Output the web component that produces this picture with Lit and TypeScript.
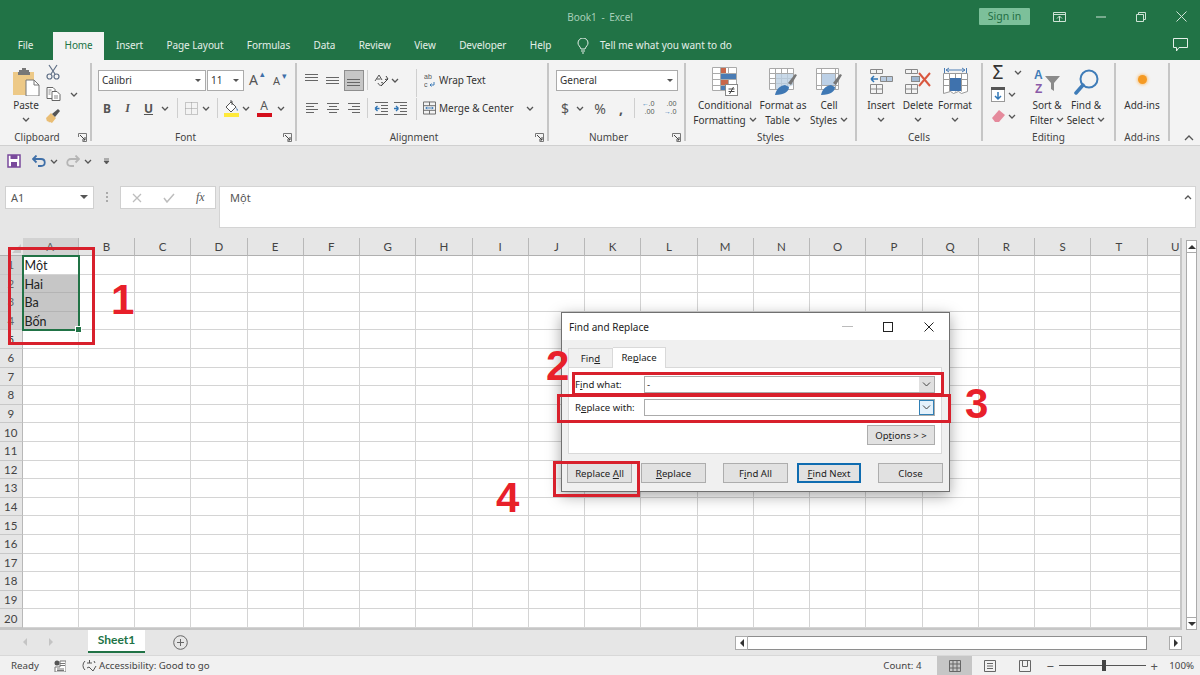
import { LitElement, css, html, svg } from "lit";
import { customElement } from "lit/decorators.js";

const COLS = "ABCDEFGHIJKLMNOPQRSTU".split("");
const ROWS = Array.from({ length: 20 }, (_, i) => i + 1);
const VALUES: Record<number, string> = { 1: "Một", 2: "Hai", 3: "Ba", 4: "Bốn" };

const chev = html`<svg class="chev" width="8" height="5" viewBox="0 0 8 5"><path d="M1 1l3 3 3-3" fill="none" stroke="#555" stroke-width="1.3"/></svg>`;
const launcher = html`<svg class="launcher" width="9" height="9" viewBox="0 0 9 9"><path d="M.5 4V.5h8v8H4.5" fill="none" stroke="#777"/><path d="M2 2l5 5M7 4v3H4" fill="none" stroke="#444"/></svg>`;
const lines = (rows: number[][]) => html`<svg width="14" height="14" viewBox="0 0 14 14">${rows.map(
  ([a, b, y]) => svg`<path d="M${a} ${y}.5H${b}" stroke="#666" stroke-width="1"/>`
)}</svg>`;

const paste = html`<svg width="27" height="28" viewBox="0 0 27 28">
  <rect x="0" y="4" width="21" height="23" fill="#edc987"/>
  <path d="M6 4V2h3V0h4v2h3v2h1v3H5V4z" fill="#777"/>
  <path d="M13 12h8l5 5v11H13z" fill="#fff" stroke="#777"/><path d="M21 12v5h5" fill="none" stroke="#777"/>
</svg>`;
const cut = html`<svg width="14" height="16" viewBox="0 0 14 16" fill="none" stroke="#5f6f86" stroke-width="1.2">
  <path d="M3 1l6 9M11 1L5 10"/><circle cx="3.5" cy="12.5" r="2.5"/><circle cx="10.5" cy="12.5" r="2.5"/></svg>`;
const copy = html`<svg width="15" height="14" viewBox="0 0 15 14" fill="#fff" stroke="#666">
  <path d="M1 .5h6l2 2v9H1z"/><path d="M6 4.5h5l3 3v6H6z"/><path d="M2.500 3h3M2.500 5h2M2.500 7h2M8 9h4M8 11h4" stroke="#888"/></svg>`;
const painter = html`<svg width="15" height="14" viewBox="0 0 15 14"><path d="M0 9l5-5 5 5-4 5-2-1-1 .5-1-1.500-1 .5z" fill="#e9bd74"/><path d="M6 5l3 3 5-6-2-2z" fill="#555"/></svg>`;
const grow = html`<span class="aa">A<i>▴</i></span>`;
const shrink = html`<span class="aa sm">A<i>▾</i></span>`;
const borders = html`<svg width="13" height="13" viewBox="0 0 13 13" fill="none" stroke="#999" stroke-dasharray="1 1"><path d="M.5.500h12v12H.5zM6.500.5v12M.5 6.500h12"/></svg>`;
const fill = html`<svg width="15" height="17" viewBox="0 0 15 17"><path d="M2 7l5-5 5 5-5 5z" fill="#fff" stroke="#555"/><path d="M6 1h2v4" fill="none" stroke="#555"/><path d="M12 7l2 3-1 1z" fill="#3f6fa8"/><rect y="13" width="15" height="4" fill="#ffe93b"/></svg>`;
const color = html`<span class="fcolor">A</span>`;
const orient = html`<svg width="16" height="14" viewBox="0 0 16 14" fill="none" stroke="#555"><path d="M2 8l4-6 3 5M3.500 6h4M5 10c1 3 4 3 5 1 .7-1.400-1-2.300-2-1"/><path d="M8 13l7-7M13 3l2 3-3 .5" stroke="#444"/></svg>`;
const wrap = html`<svg width="12" height="20" viewBox="0 0 12 20"><text x="0" y="9" class="tiny">ab</text><text x="0" y="17" class="tiny">c</text><path d="M6 15h4v-3M6 15l1.500-1.500M6 15l1.500 1.500" fill="none" stroke="#3f7cb8"/></svg>`;
const merge = html`<svg width="13" height="14" viewBox="0 0 14 14" fill="none" stroke="#666"><path d="M.5.500h13v13H.5zM.5 4.500h13M.5 9.500h13M7 .5v4M7 9.500v4"/><path d="M3 7h8M3 7l1.500-1.200M3 7l1.500 1.200M11 7L9.500 5.800M11 7L9.500 8.200" stroke="#3f7cb8"/></svg>`;
const indentL = html`<svg width="15" height="13" viewBox="0 0 15 13" fill="none"><path d="M1 .5h13M7 3.500h7M7 6.500h7M7 9.500h7M1 12.500h13" stroke="#666"/><path d="M1 6.500h4.500M1 6.500l2.500-2.500M1 6.500L3.500 9" stroke="#2f75b5" stroke-width="1.300"/></svg>`;
const indentR = html`<svg width="15" height="13" viewBox="0 0 15 13" fill="none"><path d="M1 .5h13M7 3.500h7M7 6.500h7M7 9.500h7M1 12.500h13" stroke="#666"/><path d="M5.500 6.500H1M5.500 6.500L3 4M5.500 6.500L3 9" stroke="#2f75b5" stroke-width="1.300"/></svg>`;
const decMore = html`<span class="dec"><b><i>←</i>.0</b><b>.00</b></span>`;
const decLess = html`<span class="dec"><b>.00</b><b><i>→</i>.0</b></span>`;

const cond = html`<svg width="26" height="29" viewBox="0 0 26 29">
  <path d="M.5.500h24v23H.5zM.5 6.500h24M.5 12.500h24M.5 18.500h24M8.500.5v23M16.500.5v23" fill="#fff" stroke="#aaa"/>
  <rect x="9" y="1" width="5" height="5" fill="#c8674a"/><rect x="9" y="7" width="15" height="5" fill="#4a7cb4"/>
  <rect x="9" y="13" width="7" height="5" fill="#c8674a"/><rect x="9" y="19" width="4" height="4" fill="#4a7cb4"/>
  <rect x="13.500" y="17.500" width="12" height="11" fill="#fff" stroke="#888"/>
  <path d="M16.500 22h6M16.500 24.500h6M21.500 20l-4 7" stroke="#444" fill="none"/></svg>`;
const fmtTable = html`<svg width="28" height="28" viewBox="0 0 28 28">
  <path d="M.5.500h24v21H.5zM.5 5.500h24M.5 10.500h24M.5 15.500h24M6.500.5v21M12.500.5v21M18.500.5v21" fill="#fff" stroke="#a8a8a8"/>
  <path d="M7 6h17v11l-9 4H7z" fill="#bccfe2" opacity=".8"/>
  <path d="M19 15l7-9 2 1-6 10z" fill="#777"/><path d="M6 27c1-5 4-9 10-10l4 2c0 4-4 8-14 8z" fill="#3f78b4"/></svg>`;
const cellStyles = html`<svg width="26" height="28" viewBox="0 0 26 28">
  <path d="M.5.500h22v21H.5zM.5 5.500h22M5.500.5v21M19.500.5v21M.5 17.500h22" fill="#fff" stroke="#a8a8a8"/>
  <rect x="6" y="6" width="13" height="11" fill="#bcd0e6"/>
  <path d="M17 15l7-9 2 1-6 10z" fill="#777"/><path d="M5 27c1-5 4-9 10-10l4 2c0 4-4 8-14 8z" fill="#3f78b4"/></svg>`;
const insert = html`<svg width="24" height="25" viewBox="0 0 24 25" fill="none" stroke="#888">
  <path d="M1.500.5h12v4h-12zM7.500.5v4M1.500 15.500h12v9h-12zM1.500 20h12M7.500 15.500v9"/>
  <path d="M11.500 7.500h12v5h-12zM17.500 7.500v5" fill="#b8cbe0"/>
  <path d="M2 10h7M2 10l3-3M2 10l3 3" stroke="#2f75b5" stroke-width="1.500"/></svg>`;
const del = html`<svg width="27" height="25" viewBox="0 0 27 25" fill="none" stroke="#888">
  <path d="M.5.500h12v4H.5zM6.500.5v4M.5 15.500h12v9H.5zM.5 20h12M6.500 15.500v9"/>
  <rect x="6.500" y="7.500" width="8" height="5" fill="#9fb8d2"/>
  <path d="M14 4l11 13M25 4L14 17" stroke="#d9573f" stroke-width="2"/></svg>`;
const format = html`<svg width="25" height="29" viewBox="0 0 25 29" fill="none">
  <path d="M1.500 1v5M23.500 1v5M3 3h19M3 3l3-2M3 3l3 2M22 3l-3-2M22 3l-3 2" stroke="#4a7cb4"/>
  <path d="M.5 6.500h24v18l-6 2-3-2-5 2-3-2-7 2zM.5 12.500h24M.5 18.500h24M6.500 6.500v18M12.500 6.500v18M18.500 6.500v18" fill="#fff" stroke="#999"/>
  <rect x="7" y="11" width="11" height="13" fill="#3f72ad"/></svg>`;
const fillDown = html`<svg width="14" height="15" viewBox="0 0 14 15"><rect x=".5" y=".5" width="13" height="14" fill="#fff" stroke="#999"/><rect width="14" height="3" fill="#555"/><path d="M7 5v7M4 9l3 3 3-3" fill="none" stroke="#2f75b5" stroke-width="1.500"/></svg>`;
const eraser = html`<svg width="13" height="12" viewBox="0 0 13 12"><path d="M0 8l7-8 6 5-6 7H3z" fill="#e58a9c"/></svg>`;
const sortIcon = html`<svg width="27" height="29" viewBox="0 0 27 29"><text x="0" y="12" class="sort-a">A</text><text x="1" y="26" class="sort-z">Z</text><path d="M11 9h15l-6 7v8l-3-2v-6z" fill="#8a8a8a"/></svg>`;
const findIcon = html`<svg width="25" height="26" viewBox="0 0 25 26" fill="none"><circle cx="15" cy="10" r="8.500" stroke="#3f7cb8" stroke-width="2"/><path d="M9 16l-7 8" stroke="#3f7cb8" stroke-width="3.500" stroke-linecap="round"/></svg>`;

const big = (icon: unknown, top: string, bottom: unknown) => html`<div class="big">
  <div class="big-ic">${icon}</div><div class="big-tx">${top}</div><div class="big-tx">${bottom}</div></div>`;

@customElement("app-root")
export class AppRoot extends LitElement {
  private titleBar() {
    return html`<div class="title">
      <div></div>
      <div class="doc">Book1 - Excel</div>
      <div class="win">
        <button class="signin">Sign in</button>
        <svg width="13" height="10" viewBox="0 0 13 10" fill="none" stroke="#cfe3d6"><path d="M.5.500h12v9H.5zM.5 2.500h12M4 6.500l2.500-2.500L9 6.500M6.500 4v5"/></svg>
        <svg class="wi-b" width="10" height="2" viewBox="0 0 10 2"><path d="M0 1h10" stroke="#cfe3d6"/></svg>
        <svg class="wi-c" width="10" height="10" viewBox="0 0 10 10" fill="none" stroke="#cfe3d6"><path d="M.5 2.500h7v7h-7zM2.500 2.500v-2h7v7h-2"/></svg>
        <svg class="wi-d" width="11" height="11" viewBox="0 0 11 11"><path d="M.5.500l10 10M10.500.5l-10 10" stroke="#cfe3d6"/></svg>
      </div>
    </div>`;
  }

  private tabs() {
    const names = ["Insert", "Page Layout", "Formulas", "Data", "Review", "View", "Developer", "Help"];
    return html`<div class="tabs">
      <div class="tab file">File</div>
      <div class="tab home">Home</div>
      ${names.map((n) => html`<div class="tab">${n}</div>`)}
      <svg class="bulb" width="12" height="16" viewBox="0 0 12 16" fill="none" stroke="#e4efe8"><path d="M4 11C3 8 1 7.500 1 5a5 5 0 0 1 10 0c0 2.500-2 3-3 6zM4 13h4M5 15h2"/></svg>
      <div class="tell">Tell me what you want to do</div>
      <svg class="comment" width="15" height="14" viewBox="0 0 15 14" fill="none" stroke="#e4efe8"><path d="M.5.500h14v9H6L3.500 13V9.500h-3z"/></svg>
    </div>`;
  }

  private ribbon() {
    return html`<div class="ribbon">
      <section class="group g-clip">
        <div class="body clip-body">
          <div class="big paste">
            <div class="big-ic">${paste}</div><div class="big-tx">Paste</div><div class="big-tx">${chev}</div>
          </div>
          <div class="clip-small">
            <div>${cut}</div><div></div>
            <div>${copy}</div><div>${chev}</div>
            <div>${painter}</div><div></div>
          </div>
        </div>
        <div class="label launch">Clipboard${launcher}</div>
      </section>

      <section class="group g-font">
        <div class="body rows">
          <div class="cells font-1">
            <div class="select">Calibri<span class="tri"></span></div>
            <div class="select">11<span class="tri"></span></div>
            <div>${grow}</div><div>${shrink}</div>
          </div>
          <div class="cells font-2">
            <div class="fmt b">B</div><div class="fmt i">I</div><div class="fmt u">U</div><div>${chev}</div>
            <div><span class="sep"></span></div><div>${borders}</div><div>${chev}</div>
            <div><span class="sep"></span></div><div>${fill}</div><div>${chev}</div>
            <div>${color}</div><div>${chev}</div>
          </div>
        </div>
        <div class="label launch">Font${launcher}</div>
      </section>

      <section class="group g-align">
        <div class="body rows">
          <div class="cells align-1">
            <div>${lines([[0, 13, 1], [0, 13, 4], [0, 13, 7]])}</div>
            <div>${lines([[0, 13, 4], [0, 13, 7], [0, 13, 10]])}</div>
            <div class="pressed">${lines([[0, 13, 6], [0, 13, 9], [0, 13, 12]])}</div>
            <div><span class="sep"></span></div><div>${orient}</div><div>${chev}</div><div></div>
            <div class="sep-cell"><span class="sep sep-top"></span></div>
            <div class="with-ic">${wrap}<span>Wrap Text</span></div>
          </div>
          <div class="cells align-2">
            <div>${lines([[1, 13, 2], [1, 9, 5], [1, 13, 8], [1, 9, 11]])}</div>
            <div>${lines([[1, 13, 2], [3, 11, 5], [1, 13, 8], [3, 11, 11]])}</div>
            <div>${lines([[1, 13, 2], [5, 13, 5], [1, 13, 8], [5, 13, 11]])}</div>
            <div><span class="sep"></span></div><div>${indentL}</div><div>${indentR}</div>
            <div class="sep-cell"><span class="sep sep-bot"></span></div>
            <div class="with-ic">${merge}<span>Merge &amp; Center</span></div>
            <div>${chev}</div>
          </div>
        </div>
        <div class="label launch">Alignment${launcher}</div>
      </section>

      <section class="group g-num">
        <div class="body rows">
          <div class="cells num-1"><div class="select">General<span class="tri"></span></div></div>
          <div class="cells num-2">
            <div class="sym">$</div><div>${chev}</div><div class="sym">%</div><div class="sym comma">,</div>
            <div><span class="sep"></span></div><div>${decMore}</div><div>${decLess}</div>
          </div>
        </div>
        <div class="label launch">Number${launcher}</div>
      </section>

      <section class="group g-styles">
        <div class="body bigs">
          ${big(cond, "Conditional", html`Formatting ${chev}`)}
          ${big(fmtTable, "Format as", html`Table ${chev}`)}
          ${big(cellStyles, "Cell", html`Styles ${chev}`)}
        </div>
        <div class="label">Styles</div>
      </section>

      <section class="group g-cells">
        <div class="body bigs">
          ${big(insert, "Insert", chev)}
          ${big(del, "Delete", chev)}
          ${big(format, "Format", chev)}
        </div>
        <div class="label">Cells</div>
      </section>

      <section class="group g-edit">
        <div class="body bigs">
          <div class="edit-small">
            <div class="sigma">Σ</div><div class="c1">${chev}</div>
            <div>${fillDown}</div><div class="c2">${chev}</div>
            <div>${eraser}</div><div class="c2">${chev}</div>
          </div>
          ${big(sortIcon, "Sort &", html`Filter ${chev}`)}
          ${big(findIcon, "Find &", html`Select ${chev}`)}
        </div>
        <div class="label">Editing</div>
      </section>

      <section class="group g-add">
        <div class="body bigs">
          ${big(html`<span class="dot"></span>`, "Add-ins", "")}
        </div>
        <div class="label">Add-ins</div>
      </section>

      <div class="collapse">
        <svg width="10" height="6" viewBox="0 0 10 6"><path d="M1 5l4-4 4 4" fill="none" stroke="#555" stroke-width="1.300"/></svg>
      </div>
    </div>`;
  }

  private qat() {
    return html`<div class="qat">
      <svg width="14" height="14" viewBox="0 0 14 14"><path d="M1 1h12v12H1z" fill="#fff" stroke="#7a4a9c" stroke-width="1.500"/><rect x="3.500" y="1" width="7" height="4" fill="#7a4a9c"/><rect x="4" y="8" width="6" height="5" fill="#7a4a9c"/></svg>
      <svg class="q-undo" width="14" height="12" viewBox="0 0 14 12" fill="none" stroke="#3f6fa8" stroke-width="1.800"><path d="M1 4h8c5 0 5 7 0 7H6M4.500 .5L1 4l3.500 3.500"/></svg>
      <span class="q-c1">${chev}</span>
      <svg class="q-redo" width="14" height="12" viewBox="0 0 14 12" fill="none" stroke="#b5b5b5" stroke-width="1.800"><path d="M13 4H5c-5 0-5 7 0 7h3M9.500 .5L13 4 9.500 7.500"/></svg>
      <span class="q-c2">${chev}</span>
      <svg class="q-more" width="7" height="7" viewBox="0 0 7 7"><path d="M1 1h5M1 3h5l-2.500 3z" stroke="#555" fill="#555" stroke-width=".8"/></svg>
    </div>`;
  }

  private formulaBar() {
    return html`<div class="fbar">
      <div class="namebox">A1<span class="tri"></span></div>
      <div class="grip"></div>
      <div class="fx-box">
        <svg width="10" height="10" viewBox="0 0 10 10"><path d="M1 1l8 8M9 1L1 9" stroke="#bdbdbd" stroke-width="1.300"/></svg>
        <svg width="12" height="10" viewBox="0 0 12 10"><path d="M1 5l3 4 7-8" fill="none" stroke="#bdbdbd" stroke-width="1.500"/></svg>
        <span class="fx">fx</span>
      </div>
      <div class="finput">Một
        <svg class="f-up" width="8" height="5" viewBox="0 0 8 5"><path d="M1 4l3-3 3 3" fill="none" stroke="#555" stroke-width="1.300"/></svg>
      </div>
    </div>`;
  }

  private sheet() {
    return html`<div class="sheet-wrap">
      <div class="sheet">
        <div class="corner"><span class="corner-tri"></span></div>
        ${COLS.map((c) => html`<div class="ch ${c === "A" ? "ch-on" : ""}">${c}</div>`)}
        ${ROWS.map(
          (r) => html`<div class="rh ${r <= 4 ? "rh-on" : ""}">${r}</div>
            ${COLS.map(
              (c) => html`<div class="cell ${c === "A" && r >= 2 && r <= 4 ? "sel" : ""}">${c === "A" ? VALUES[r] ?? "" : ""}</div>`
            )}`
        )}
        <div class="selection"><span class="handle"></span></div>
      </div>
      <div class="vscroll">
        <div class="sb-btn"><span class="up"></span></div>
        <div class="sb-thumb"></div>
        <div class="sb-btn"><span class="down"></span></div>
      </div>
    </div>`;
  }

  private sheetTabs() {
    return html`<div class="stabs">
      <span class="nav"><span class="nav-l"></span></span>
      <span class="nav"><span class="nav-r"></span></span>
      <div class="stab">Sheet1</div>
      <svg class="plus" width="15" height="15" viewBox="0 0 15 15" fill="none" stroke="#666"><circle cx="7.500" cy="7.500" r="6.800"/><path d="M4 7.500h7M7.500 4v7"/></svg>
      <div class="hscroll">
        <div class="hb"><span class="nav-l dark"></span></div>
        <div class="hthumb"></div>
        <div class="hb"><span class="nav-r dark"></span></div>
      </div>
    </div>`;
  }

  private statusBar() {
    return html`<div class="status">
      <span class="ready">Ready</span>
      <svg class="macro" width="12" height="12" viewBox="0 0 12 12"><circle cx="3" cy="3" r="2.500" fill="#555"/><path d="M6 1h6v11H1V7h5z" fill="#fff" stroke="#777"/><path d="M3 9h7M3 10.500h7M6 3.500h5M6 5.500h5" stroke="#777"/></svg>
      <svg class="acc" width="15" height="14" viewBox="0 0 15 14" fill="none" stroke="#555"><path d="M3 2a6 6 0 0 0 0 9M12 2l1 2M7.500 1v3M5 4h5M5 9l2-1 4 4 3-5"/></svg>
      <span class="acc-t">Accessibility: Good to go</span>
      <span class="count">Count: 4</span>
      <span class="view on"><svg width="12" height="12" viewBox="0 0 12 12" fill="none" stroke="#666"><path d="M.5.500h11v11H.5zM.5 4h11M.5 8h11M4 .5v11M8 .5v11"/></svg></span>
      <span class="view"><svg width="12" height="12" viewBox="0 0 12 12" fill="none" stroke="#666"><path d="M.5.500h11v11H.5zM3 3.500h6M3 6h6M3 8.500h6"/></svg></span>
      <span class="view"><svg width="12" height="12" viewBox="0 0 12 12" fill="none" stroke="#666"><path d="M.5.500h11v11H.5zM3.500.5v6h5v-6"/></svg></span>
      <span class="zm minus">−</span>
      <span class="slider"><span class="knob"></span></span>
      <span class="zm add">+</span>
      <span class="pct">100%</span>
    </div>`;
  }

  private dialog() {
    return html`<div class="dialog">
      <div class="d-title">
        <span class="d-name">Find and Replace</span>
        <svg width="11" height="1" viewBox="0 0 11 1"><path d="M0 .5h11" stroke="#bbb"/></svg>
        <svg class="d-max" width="10" height="10" viewBox="0 0 10 10"><rect x=".5" y=".5" width="9" height="9" fill="none" stroke="#222"/></svg>
        <svg class="d-close" width="10" height="10" viewBox="0 0 10 10"><path d="M.5.500l9 9M9.500.5l-9 9" stroke="#222"/></svg>
      </div>
      <div class="d-tabs">
        <div class="d-tab">Fin<u>d</u></div>
        <div class="d-tab active">Re<u>p</u>lace</div>
      </div>
      <div class="panel">
        <div class="field">
          <label>F<u>i</u>nd what:</label>
          <div class="combo"><span class="val">-</span><span class="drop"><svg width="9" height="5" viewBox="0 0 9 5"><path d="M1 .5l3.500 3.500L8 .5" fill="none" stroke="#444"/></svg></span></div>
        </div>
        <div class="field">
          <label>R<u>e</u>place with:</label>
          <div class="combo focus"><span class="val"></span><span class="drop"><svg width="9" height="5" viewBox="0 0 9 5"><path d="M1 .5l3.500 3.500L8 .5" fill="none" stroke="#444"/></svg></span></div>
        </div>
        <div class="opt-row"><button class="btn opt">Op<u>t</u>ions &gt; &gt;</button></div>
      </div>
      <div class="d-btns">
        <button class="btn">Replace <u>A</u>ll</button>
        <button class="btn"><u>R</u>eplace</button>
        <button class="btn m">F<u>i</u>nd All</button>
        <button class="btn primary"><u>F</u>ind Next</button>
        <button class="btn m">Close</button>
      </div>
    </div>`;
  }

  render() {
    return html`<div class="app">
      ${this.titleBar()} ${this.tabs()} ${this.ribbon()} ${this.qat()} ${this.formulaBar()} ${this.sheet()}
      ${this.sheetTabs()} ${this.statusBar()} ${this.dialog()}
      <div class="mark m1"></div>
      <div class="mark m2"></div>
      <div class="mark m3"></div>
      <div class="mark m4"></div>
      <span class="num n1">1</span>
      <span class="num n2">2</span>
      <span class="num n3">3</span>
      <span class="num n4">4</span>
    </div>`;
  }

  static styles = css`
    :host {
      display: block;
      width: 1200px;
      height: 675px;
    }
    * {
      box-sizing: border-box;
    }
    .app {
      position: relative;
      width: 1200px;
      height: 675px;
      overflow: hidden;
      display: flex;
      flex-direction: column;
      background: #e6e6e6;
      font-family: "Noto Sans", "Open Sans", sans-serif;
      font-size: 10px;
      color: #333;
    }
    svg {
      display: block;
      flex: none;
    }

    /* title + tabs */
    .title {
      height: 33px;
      background: #217346;
      display: grid;
      grid-template-columns: 1fr auto 1fr;
      align-items: center;
    }
    .doc {
      color: #a6cfb8;
      word-spacing: 2px;
    }
    .win {
      display: flex;
      justify-content: flex-end;
      align-items: center;
    }
    .signin {
      width: 51px;
      height: 17px;
      padding: 0;
      border: 0;
      border-radius: 1px;
      background: #7cc09a;
      color: #1f6e43;
      font: inherit;
      font-size: 10.5px;
      margin: -1px 23px 0 0;
    }
    .wi-b {
      margin-left: 30px;
    }
    .wi-c {
      margin-left: 30px;
    }
    .wi-d {
      margin: 0 13px 0 30px;
    }
    .tabs {
      height: 27px;
      background: #217346;
      display: flex;
      align-items: stretch;
      color: #e4efe8;
      padding-left: 6px;
    }
    .tab {
      padding: 5px 11.700px 0;
      white-space: nowrap;
      letter-spacing: -0.08px;
    }
    .tab.file {
      margin-right: 8px;
    }
    .tab.home {
      margin-top: -1px;
      padding: 6px 11.5px 0;
      background: #f3f3f3;
      color: #217346;
    }
    .bulb {
      align-self: center;
      margin: -1px 0 0 14px;
    }
    .tell {
      padding: 5px 0 0 11px;
      white-space: nowrap;
    }
    .comment {
      align-self: center;
      margin: -3px 12px 0 auto;
    }

    /* ribbon */
    .ribbon {
      height: 86px;
      display: flex;
      background: #f3f3f3;
      border-bottom: 1px solid #d0d0d0;
      padding: 3px 0 0;
    }
    .group {
      height: 78px;
      display: flex;
      flex-direction: column;
      border-right: 2px solid #c6c6c6;
    }
    .g-clip { width: 92px; }
    .g-font { width: 205px; }
    .g-align { width: 252px; }
    .g-num { width: 137px; }
    .g-styles { width: 171px; }
    .g-cells { width: 126px; }
    .g-edit { width: 133px; }
    .g-add { width: 54px; }
    .body {
      flex: none;
      height: 67px;
    }
    .label {
      flex: none;
      position: relative;
      height: 14px;
      line-height: 14px;
      text-align: center;
      color: #444;
    }
    .label.launch {
      padding-right: 16px;
    }
    .launcher {
      position: absolute;
      right: 3px;
      top: 3px;
    }
    .rows {
      display: grid;
      grid-template-rows: 20px 20px;
      row-gap: 8px;
      padding-top: 7px;
    }
    .cells {
      display: grid;
      grid-template-rows: 20px;
      align-items: center;
      justify-items: center;
      height: 20px;
    }
    .cells > div {
      display: flex;
      align-items: center;
    }
    .cells > .sep-cell {
      align-self: start;
    }
    .font-1 { grid-template-columns: 108px 37px 24px 22px; padding-left: 6px; }
    .font-1 .select:nth-child(2) { margin-left: 2px; width: 37px; }
    .font-2 { grid-template-columns: 20px 21px 21px 12px 12px 16px 14px 8px 20px 10px 26px 8px; padding-left: 5px; }
    .align-1 { grid-template-columns: 20px 21px 21px 7px 20px 8px 13px 8px auto; padding-left: 5px; justify-content: start; }
    .align-2 { grid-template-columns: 20px 21px 21px 7px 20px 18px 14px 99px 16px; padding-left: 5px; justify-content: start; }
    .num-1 { grid-template-columns: 122px; padding-left: 7px; }
    .num-2 { grid-template-columns: 18px 12px 28px 14px 12px 16px 28px; padding-left: 7px; justify-content: start; }
    .select {
      position: relative;
      width: 100%;
      height: 21px;
      background: #fff;
      border: 1px solid #ababab;
      padding-left: 3px;
    }
    .tri {
      position: absolute;
      right: 4px;
      top: 8px;
      border: 3px solid transparent;
      border-top: 3px solid #555;
      border-bottom: 0;
    }
    .sep {
      display: block;
      width: 1px;
      height: 20px;
      background: #cfcfcf;
    }
    .sep-top {
      height: 28px;
      margin-top: -1px;
    }
    .sep-bot {
      height: 22px;
    }
    .aa {
      position: relative;
      font-size: 14px;
      color: #555;
      line-height: 1;
      padding-right: 3px;
    }
    .aa.sm {
      font-size: 11px;
    }
    .aa i {
      position: absolute;
      right: -4px;
      top: -4px;
      font-size: 9px;
      font-style: normal;
      color: #3f6fa8;
    }
    .fmt {
      font: bold 12px "Liberation Serif", serif;
      color: #555;
    }
    .fmt.b { font-family: "Noto Sans", sans-serif; }
    .fmt.i { font-style: italic; }
    .fmt.u { text-decoration: underline; font-family: "Noto Sans", sans-serif; }
    .fcolor {
      display: block;
      width: 15px;
      border-bottom: 4px solid #d40f1c;
      text-align: center;
      font-size: 12px;
      line-height: 14px;
      color: #555;
    }
    .cells > .pressed {
      width: 20px;
      height: 21px;
      justify-content: center;
      background: #c6c6c6;
      border: 1px solid #8e8e8e;
    }
    .tiny {
      font: 7px "Liberation Sans", sans-serif;
      fill: #555;
    }
    .with-ic {
      gap: 3px;
      justify-self: start;
      white-space: nowrap;
    }
    .align-1 .with-ic { margin-left: 4px; }
    .sym {
      font-size: 14px;
      color: #555;
    }
    .comma {
      font-weight: 700;
    }
    .dec {
      display: flex;
      flex-direction: column;
      align-items: flex-end;
      font: 7.200px/8.500px "Liberation Sans", sans-serif;
      color: #555;
    }
    .dec b {
      font-weight: 400;
    }
    .dec i {
      font-style: normal;
      color: #2f75b5;
    }
    .clip-body {
      display: flex;
    }
    .paste {
      width: 40px;
      margin-left: 6px;
    }
    .clip-small {
      display: grid;
      grid-template-columns: 14px 27px;
      grid-auto-rows: 20px;
      row-gap: 2px;
      justify-items: center;
      align-items: center;
      margin-top: -1px;
    }
    .bigs {
      display: flex;
    }
    .big {
      display: flex;
      flex-direction: column;
      align-items: center;
      white-space: nowrap;
    }
    .big-ic {
      height: 29px;
      margin-top: 4px;
      margin-bottom: 2px;
      display: flex;
      align-items: center;
      justify-content: center;
    }
    .big-tx {
      height: 14.500px;
      line-height: 14.500px;
      display: flex;
      align-items: center;
      gap: 3px;
    }
    .g-styles .bigs { padding-left: 4px; }
    .g-styles .big:nth-child(1) { width: 70px; }
    .g-styles .big:nth-child(2),
    .g-styles .big:nth-child(3) { width: 46px; }
    .g-cells .bigs { padding-left: 6px; }
    .g-cells .big:nth-child(1) { width: 36px; }
    .g-cells .big:nth-child(2) { width: 38px; }
    .g-cells .big:nth-child(3) { width: 36px; }
    .edit-small {
      width: 44px;
      display: grid;
      grid-template-columns: 30px 14px;
      grid-auto-rows: 20px;
      row-gap: 2px;
      justify-items: center;
      align-items: center;
      margin-top: -1px;
    }
    .sigma {
      font-size: 19px;
      line-height: 20px;
      color: #333;
    }
    .edit-small .c1 {
      justify-self: start;
      margin-left: 1px;
    }
    .edit-small .c2 {
      justify-self: start;
      margin-left: -5px;
    }
    .g-edit .big:nth-child(2) { width: 40px; }
    .g-edit .big:nth-child(3) { width: 38px; }
    .sort-a {
      font: 700 12px "Liberation Sans", sans-serif;
      fill: #3f7cb8;
    }
    .sort-z {
      font: 700 12px "Liberation Sans", sans-serif;
      fill: #8a5aa8;
    }
    .g-add .big { width: 52px; }
    .dot {
      width: 9px;
      height: 9px;
      border-radius: 50%;
      background: #f59a23;
      box-shadow: 0 0 3px 1px #f9c98a;
      margin-top: -4px;
    }
    .collapse {
      flex: 1;
      display: flex;
      justify-content: flex-end;
      align-items: flex-end;
      padding: 0 6px 0 0;
      height: 78px;
    }

    /* quick access */
    .qat {
      height: 30px;
      display: flex;
      align-items: center;
      padding-left: 7px;
    }
    .q-undo { margin-left: 11px; }
    .q-c1 { margin-left: 4px; }
    .q-redo { margin-left: 8px; }
    .q-c2 { margin-left: 4px; }
    .q-more { margin-left: 11px; }

    /* formula bar */
    .fbar {
      height: 62px;
      display: flex;
      align-items: flex-start;
      padding: 10px 4px 0 5px;
    }
    .namebox {
      position: relative;
      width: 89px;
      height: 23px;
      background: #fff;
      border: 1px solid #d0d0d0;
      padding: 3px 0 0 5px;
      font-size: 11px;
      color: #555;
    }
    .namebox .tri {
      border-width: 4px;
      border-bottom: 0;
      top: 8px;
      right: 5px;
    }
    .grip {
      width: 2px;
      height: 10px;
      margin: 6px 12px 0 12px;
      border-left: 2px dotted #aaa;
    }
    .fx-box {
      width: 96px;
      height: 23px;
      display: flex;
      align-items: center;
      gap: 21px;
      padding-left: 11px;
      background: #fff;
      border: 1px solid #d0d0d0;
    }
    .fx {
      font: italic 12px "Liberation Serif", serif;
      color: #555;
    }
    .finput {
      position: relative;
      flex: 1;
      height: 42px;
      margin-left: 3px;
      padding: 3px 0 0 10px;
      background: #fff;
      border: 1px solid #d4d4d4;
      font-size: 11px;
      color: #555;
    }
    .f-up {
      position: absolute;
      right: 3px;
      top: 8px;
    }

    /* sheet */
    .sheet-wrap {
      height: 392px;
      display: flex;
    }
    .sheet {
      position: relative;
      width: 1182px;
      height: 392px;
      display: grid;
      grid-template-columns: 22.500px repeat(21, 56.250px);
      grid-template-rows: 18px repeat(20, 18.600px);
      overflow: hidden;
      background: #fff;
      border-right: 2px solid #c6c6c6;
      border-bottom: 2px solid #c6c6c6;
    }
    .corner {
      position: relative;
      background: #e6e6e6;
      border-bottom: 1px solid #b0b0b0;
    }
    .corner-tri {
      position: absolute;
      right: 2px;
      bottom: 2px;
      border-left: 9px solid transparent;
      border-bottom: 9px solid #c8c8c8;
    }
    .ch,
    .rh {
      background: #e6e6e6;
      border-right: 1px solid #b8b8b8;
      border-bottom: 1px solid #b0b0b0;
      display: flex;
      align-items: center;
      justify-content: center;
      font: 11.500px "Lato", sans-serif;
      color: #444;
    }
    .rh {
      border-bottom-color: #c8c8c8;
    }
    .ch-on,
    .rh-on {
      background: #d2d2d2;
      color: #666;
    }
    .cell {
      border-right: 1px solid #d4d4d4;
      border-bottom: 1px solid #d4d4d4;
      padding-left: 2px;
      font: 12.500px/20px "Lato", sans-serif;
      color: #222;
      white-space: nowrap;
      overflow: hidden;
    }
    .cell.sel {
      background: #c6c6c6;
      border-right-color: #c6c6c6;
      border-bottom-color: #b4b4b4;
    }
    .selection {
      position: absolute;
      left: 21.500px;
      top: 17px;
      width: 58px;
      height: 76px;
      border: 2px solid #217346;
    }
    .handle {
      position: absolute;
      right: -3px;
      bottom: -3px;
      width: 5px;
      height: 5px;
      background: #217346;
      outline: 1px solid #fff;
    }
    .vscroll {
      flex: 1;
      display: flex;
      flex-direction: column;
      padding: 2px 3px 0 4px;
    }
    .sb-btn {
      flex: none;
      height: 13px;
      background: #fff;
      border: 1px solid #ababab;
      display: flex;
      align-items: center;
      justify-content: center;
    }
    .sb-thumb {
      flex: 1;
      background: #fff;
      border-left: 1px solid #ababab;
      border-right: 1px solid #ababab;
    }
    .up {
      border: 4px solid transparent;
      border-bottom: 4px solid #333;
      border-top: 0;
    }
    .down {
      border: 4px solid transparent;
      border-top: 4px solid #333;
      border-bottom: 0;
    }

    /* sheet tabs */
    .stabs {
      height: 25px;
      display: flex;
      align-items: flex-start;
    }
    .nav {
      width: 26px;
      height: 24px;
      display: flex;
      align-items: center;
      justify-content: center;
    }
    .nav:first-child {
      margin-left: 12px;
    }
    .nav-l {
      border: 4px solid transparent;
      border-right: 4px solid #c4c4c4;
      border-left: 0;
    }
    .nav-r {
      border: 4px solid transparent;
      border-left: 4px solid #c4c4c4;
      border-right: 0;
    }
    .nav-l.dark { border-right-color: #333; }
    .nav-r.dark { border-left-color: #333; }
    .stab {
      width: 57px;
      height: 23px;
      margin-left: 24px;
      background: #fff;
      border-bottom: 2px solid #217346;
      color: #217346;
      font: 700 12px/20px "Lato", sans-serif;
      text-align: center;
    }
    .plus {
      margin: 5px 0 0 28px;
    }
    .hscroll {
      width: 447px;
      height: 14px;
      margin: 6px 18px 0 auto;
      display: flex;
    }
    .hb {
      width: 13px;
      height: 14px;
      background: #fff;
      border: 1px solid #ababab;
      display: flex;
      align-items: center;
      justify-content: center;
    }
    .hthumb {
      width: 399px;
      background: #fff;
      border: 1px solid #8e8e8e;
      border-left: 0;
      margin-right: 22px;
    }

    /* status bar */
    .status {
      height: 20px;
      flex: none;
      display: flex;
      align-items: center;
      background: #f1f1f1;
      border-top: 1px solid #d8d8d8;
      font-size: 9.700px;
      color: #444;
    }
    .ready { margin-left: 11px; width: 43px; }
    .acc { margin-left: 16px; }
    .acc-t { margin-left: 2px; white-space: nowrap; }
    .count { margin-left: auto; width: 54px; }
    .view {
      width: 35px;
      height: 19px;
      display: flex;
      align-items: center;
      justify-content: center;
    }
    .view.on {
      background: #c6c6c6;
    }
    .zm {
      width: 10px;
      text-align: center;
      font-size: 13px;
      color: #555;
    }
    .zm.minus { margin-left: 3px; }
    .zm.add { margin-left: 3px; }
    .slider {
      position: relative;
      width: 87px;
      height: 1px;
      margin-left: 4px;
      background: #555;
    }
    .knob {
      position: absolute;
      left: 43px;
      top: -5px;
      width: 4px;
      height: 11px;
      background: #444;
    }
    .pct {
      margin: 0 6px 0 10px;
    }

    /* dialog */
    .dialog {
      position: absolute;
      left: 561px;
      top: 312px;
      width: 389px;
      height: 180px;
      background: #f0f0f0;
      border: 1px solid #707070;
      box-shadow: 0 4px 14px rgba(0, 0, 0, 0.35);
      display: flex;
      flex-direction: column;
      font-size: 9.600px;
      color: #222;
    }
    .d-title {
      height: 27px;
      flex: none;
      display: flex;
      align-items: center;
      padding: 0 15px 0 7px;
      background: #fff;
    }
    .d-name {
      flex: 1;
      font-size: 10px;
    }
    .d-max {
      margin-left: 30px;
    }
    .d-close {
      margin-left: 31px;
    }
    .d-tabs {
      height: 27px;
      flex: none;
      display: flex;
      align-items: flex-end;
      padding-left: 6px;
    }
    .d-tab {
      width: 45px;
      height: 19px;
      text-align: center;
      line-height: 19px;
      background: #f0f0f0;
      border: 1px solid #d9d9d9;
      border-bottom: 0;
    }
    .d-tab.active {
      width: 53px;
      height: 21px;
      background: #fff;
      border-left: 0;
      margin-bottom: -1px;
      position: relative;
      z-index: 1;
    }
    .panel {
      height: 87px;
      flex: none;
      margin: 0 7px 0 6px;
      padding: 8px 6px 0 6px;
      background: #fff;
      border: 1px solid #d9d9d9;
      display: flex;
      flex-direction: column;
      gap: 6px;
    }
    .field {
      display: flex;
      align-items: center;
      height: 17px;
    }
    .field label {
      width: 69px;
      flex: none;
    }
    .combo {
      flex: 1;
      height: 17px;
      display: flex;
      border: 1px solid #ababab;
      background: #fff;
    }
    .val {
      flex: 1;
      padding-left: 2px;
      line-height: 15px;
    }
    .drop {
      width: 15px;
      display: flex;
      align-items: center;
      justify-content: center;
      background: #e0e0e0;
    }
    .combo.focus .drop {
      background: #e4f1fb;
      border: 1px solid #2f7fb5;
    }
    .opt-row {
      display: flex;
      justify-content: flex-end;
      margin-top: 3px;
    }
    .btn {
      width: 65px;
      height: 20px;
      padding: 0;
      background: #e1e1e1;
      border: 1px solid #adadad;
      font: inherit;
      color: #222;
    }
    .btn.opt {
      width: 68px;
    }
    .d-btns {
      display: flex;
      gap: 9px;
      padding: 9px 0 0 5px;
    }
    .btn.m {
      margin-left: 8px;
    }
    .btn.primary {
      width: 64px;
      border: 2px solid #0f6cb0;
    }

    /* annotations */
    .mark {
      position: absolute;
      border: 3px solid #d8202c;
    }
    .m1 { left: 8px; top: 247px; width: 87px; height: 98px; }
    .m2 { left: 572px; top: 372px; width: 372px; height: 24px; }
    .m3 { left: 557px; top: 394px; width: 394px; height: 29px; }
    .m4 { left: 553px; top: 461px; width: 87px; height: 36px; }
    .num {
      position: absolute;
      color: #e8202a;
      font: 700 42px/40px "Liberation Sans", sans-serif;
    }
    .n1 { left: 111px; top: 280px; }
    .n2 { left: 546px; top: 346px; }
    .n3 { left: 965px; top: 384px; }
    .n4 { left: 496px; top: 478px; }
  `;
}
